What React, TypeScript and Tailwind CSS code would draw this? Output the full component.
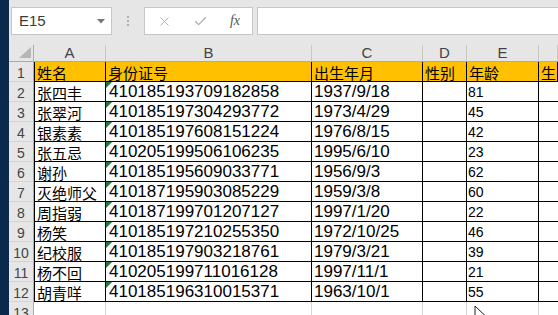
import { X, Check } from "lucide-react";

const rows = [
  ["张四丰", "410185193709182858", "1937/9/18", "81"],
  ["张翠河", "410185197304293772", "1973/4/29", "45"],
  ["银素素", "410185197608151224", "1976/8/15", "42"],
  ["张五忌", "410205199506106235", "1995/6/10", "23"],
  ["谢孙", "410185195609033771", "1956/9/3", "62"],
  ["灭绝师父", "410187195903085229", "1959/3/8", "60"],
  ["周指弱", "410187199701207127", "1997/1/20", "22"],
  ["杨笑", "410185197210255350", "1972/10/25", "46"],
  ["纪校服", "410185197903218761", "1979/3/21", "39"],
  ["杨不回", "410205199711016128", "1997/11/1", "21"],
  ["胡青咩", "410185196310015371", "1963/10/1", "55"],
];

const cjk = "font-['Noto_Sans_CJK_SC',sans-serif]";
const num = "font-['Liberation_Sans',Arial,sans-serif]";
const cols = "grid grid-cols-[25px_72px_206px_111px_44px_72px_1fr]";

const RowHead = ({ n }: { n: number | string }) => (
  <div className={`${num} flex items-end justify-center pb-[1px] bg-[#e6e6e6] border-r border-b border-r-[#ababab] border-b-[#d4d4d4] text-[14px] text-[#444] leading-none h-[20px]`}>
    {n}
  </div>
);

const App = () => {
  return (
    <div className="flex w-[558px] h-[315px] overflow-hidden bg-white">
      <div className="w-[9px] shrink-0 bg-[#0b2a4b]" />
      <div className="flex-1 flex flex-col min-w-0 relative">
        {/* formula bar */}
        <div className="h-[45px] shrink-0 bg-[#e6e6e6] flex items-start pt-[7px] pl-[2px] gap-0">
          <div className="w-[101px] h-[28px] bg-white border border-[#c6c6c6] flex items-center justify-between pl-[7px] pr-[6px]">
            <span className={`${num} text-[15px] text-[#3a3a3a]`}>E15</span>
            <svg width="8" height="5" viewBox="0 0 8 5">
              <path d="M0 0h8L4 4.5z" fill="#777" />
            </svg>
          </div>
          <div className="w-[32px] h-[28px] flex flex-col items-center justify-center gap-[2px]">
            <span className="w-[2px] h-[2px] bg-[#b0b0b0]" />
            <span className="w-[2px] h-[2px] bg-[#b0b0b0]" />
            <span className="w-[2px] h-[2px] bg-[#b0b0b0]" />
          </div>
          <div className="w-[109px] h-[28px] bg-white border border-[#c6c6c6] flex items-center justify-between pl-[12px] pr-[12px]">
            <X size={15} strokeWidth={1.4} color="#a8a8a8" />
            <Check size={15} strokeWidth={1.8} color="#a8a8a8" />
            <span className="font-['Liberation_Serif',serif] italic text-[14px] text-[#555] leading-none">fx</span>
          </div>
          <div className="ml-[4px] flex-1 h-[28px] bg-white border border-[#c6c6c6] border-r-0" />
        </div>

        {/* column headers */}
        <div className={`${cols} h-[18px] bg-[#e6e6e6] border-b border-[#ababab]`}>
          <div className="flex items-end justify-end border-r border-[#ababab] pr-[2px] pb-[3px]">
            <svg width="12" height="11" viewBox="0 0 12 11">
              <path d="M12 0V11H0z" fill="#b6b6b6" />
            </svg>
          </div>
          {["A", "B", "C", "D", "E", "F"].map((c) => (
            <div key={c} className={`${num} flex items-end justify-center border-r border-[#c8c8c8] text-[15px] text-[#444] leading-none pb-[1px]`}>
              {c === "F" ? "" : c}
            </div>
          ))}
        </div>

        {/* row 1 */}
        <div className={cols}>
          <RowHead n={1} />
          {["姓名", "身份证号", "出生年月", "性别", "年龄", "生"].map((h, i) => (
            <div key={h} className={`${cjk} h-[20px] bg-[#ffc000] border-b border-r border-black ${i === 0 ? "border-l" : ""} text-[15px] text-black leading-none flex items-end pl-[2px] pb-[1px] whitespace-nowrap overflow-hidden`}>
              {h}
            </div>
          ))}
        </div>

        {rows.map((r, idx) => (
          <div key={idx} className={cols}>
            <RowHead n={idx + 2} />
            <div className={`${cjk} h-[20px] border-b border-r border-l border-black text-[15px] text-black leading-none flex items-end pl-[2px] pb-[1px] whitespace-nowrap`}>
              {r[0]}
            </div>
            <div className={`${num} relative h-[20px] border-b border-r border-black text-[17px] text-black leading-none flex items-end pl-[3px] pb-[1px]`}>
              <svg width="6" height="6" viewBox="0 0 6 6" className="absolute left-0 top-0">
                <path d="M0 0H6L0 6z" fill="#1e7b3c" />
              </svg>
              {r[1]}
            </div>
            <div className={`${num} h-[20px] border-b border-r border-black text-[17px] text-black leading-none flex items-end pl-[2px] pb-[1px]`}>
              {r[2]}
            </div>
            <div className="h-[20px] border-b border-r border-black" />
            <div className={`${num} h-[20px] border-b border-r border-black text-[14px] text-black leading-none flex items-end pl-[1px] pb-[2px]`}>
              {r[3]}
            </div>
            <div className="h-[20px] border-b border-black" />
          </div>
        ))}

        {/* row 13 */}
        <div className={cols}>
          <RowHead n={13} />
          <div className="h-[20px] border-r border-b border-[#d4d4d4]" />
          <div className="h-[20px] border-r border-b border-[#d4d4d4]" />
          <div className="h-[20px] border-r border-b border-[#d4d4d4]" />
          <div className="h-[20px] border-r border-b border-[#d4d4d4]" />
          <div className="h-[20px] border-r border-b border-[#d4d4d4]" />
          <div className="h-[20px] border-b border-[#d4d4d4]" />
        </div>

        {/* mouse pointer */}
        <svg width="14" height="20" viewBox="0 0 14 20" className="absolute left-[465px] top-[305px]">
          <path d="M1 1V16L4.5 12.5L7 18.5L9.5 17.5L7 11.5H12z" fill="white" stroke="#222" strokeWidth="1" strokeLinejoin="round" />
        </svg>
      </div>
    </div>
  );
};

export default App;
